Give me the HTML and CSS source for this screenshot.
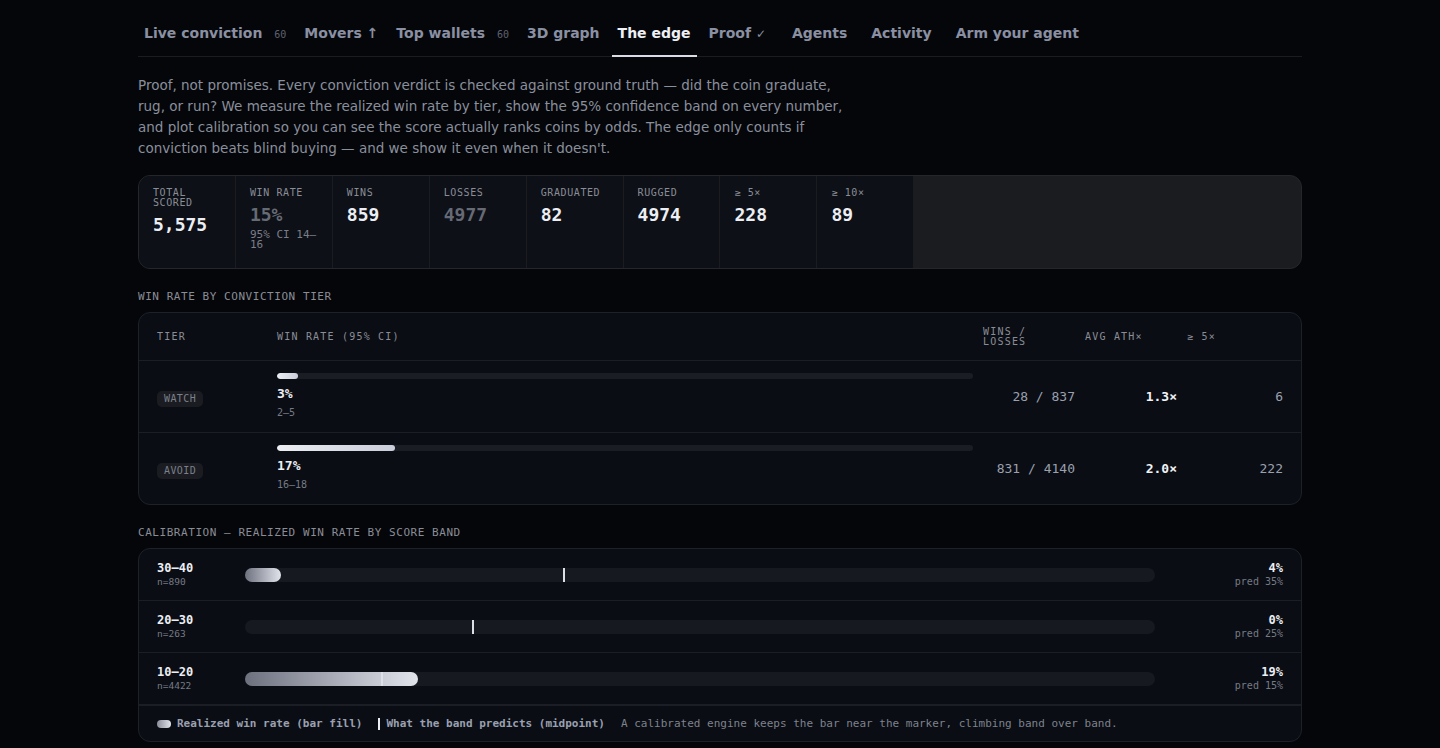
FILE: index.html
```html
<!DOCTYPE html>
<html lang="en">
<head>
    <meta charset="UTF-8">
    <title>The edge — Proof</title>
    <link rel="stylesheet" href="styles.css">
</head>
<body>
    <div class="page">
        <nav class="tabs">
            <a class="tab">Live conviction <span class="tab-count">60</span></a>
            <a class="tab">Movers ↑</a>
            <a class="tab">Top wallets <span class="tab-count">60</span></a>
            <a class="tab">3D graph</a>
            <a class="tab tab-active">The edge</a>
            <a class="tab tab-proof">Proof <span class="tab-check">✓</span></a>
            <a class="tab tab-spaced">Agents</a>
            <a class="tab tab-spaced">Activity</a>
            <a class="tab">Arm your agent</a>
        </nav>

        <p class="intro">
            Proof, not promises. Every conviction verdict is checked against ground truth — did the coin graduate,
            rug, or run? We measure the realized win rate by tier, show the 95% confidence band on every number,
            and plot calibration so you can see the score actually ranks coins by odds. The edge only counts if
            conviction beats blind buying — and we show it even when it doesn't.
        </p>

        <div class="stats">
            <div class="stat">
                <div class="stat-label">Total scored</div>
                <div class="stat-value">5,575</div>
            </div>
            <div class="stat">
                <div class="stat-label">Win rate</div>
                <div class="stat-value muted">15%</div>
                <div class="stat-sub">95% CI 14–16</div>
            </div>
            <div class="stat">
                <div class="stat-label">Wins</div>
                <div class="stat-value">859</div>
            </div>
            <div class="stat">
                <div class="stat-label">Losses</div>
                <div class="stat-value muted">4977</div>
            </div>
            <div class="stat">
                <div class="stat-label">Graduated</div>
                <div class="stat-value">82</div>
            </div>
            <div class="stat">
                <div class="stat-label">Rugged</div>
                <div class="stat-value">4974</div>
            </div>
            <div class="stat">
                <div class="stat-label">≥ 5×</div>
                <div class="stat-value">228</div>
            </div>
            <div class="stat">
                <div class="stat-label">≥ 10×</div>
                <div class="stat-value">89</div>
            </div>
        </div>

        <h3 class="section-head">Win rate by conviction tier</h3>
        <div class="card tiers">
            <div class="tier-row tier-head">
                <div>Tier</div>
                <div>Win rate (95% CI)</div>
                <div>Wins / Losses</div>
                <div>Avg ATH×</div>
                <div>≥ 5×</div>
            </div>
            <div class="tier-row">
                <div><span class="pill">Watch</span></div>
                <div class="rate">
                    <div class="track"><div class="fill" style="width: 3%"></div></div>
                    <div class="rate-pct">3%</div>
                    <div class="rate-ci">2–5</div>
                </div>
                <div class="num">28 / 837</div>
                <div class="num strong">1.3×</div>
                <div class="num">6</div>
            </div>
            <div class="tier-row">
                <div><span class="pill">Avoid</span></div>
                <div class="rate">
                    <div class="track"><div class="fill" style="width: 17%"></div></div>
                    <div class="rate-pct">17%</div>
                    <div class="rate-ci">16–18</div>
                </div>
                <div class="num">831 / 4140</div>
                <div class="num strong">2.0×</div>
                <div class="num">222</div>
            </div>
        </div>

        <h3 class="section-head">Calibration — realized win rate by score band</h3>
        <div class="card calib">
            <div class="band">
                <div>
                    <div class="band-name">30–40</div>
                    <div class="band-n">n=890</div>
                </div>
                <div class="band-track">
                    <div class="band-fill" style="width: 4%"></div>
                    <div class="band-mark" style="left: 35%"></div>
                </div>
                <div class="band-result">
                    <div class="band-pct">4%</div>
                    <div class="band-pred">pred 35%</div>
                </div>
            </div>
            <div class="band">
                <div>
                    <div class="band-name">20–30</div>
                    <div class="band-n">n=263</div>
                </div>
                <div class="band-track">
                    <div class="band-fill" style="width: 0%"></div>
                    <div class="band-mark" style="left: 25%"></div>
                </div>
                <div class="band-result">
                    <div class="band-pct">0%</div>
                    <div class="band-pred">pred 25%</div>
                </div>
            </div>
            <div class="band">
                <div>
                    <div class="band-name">10–20</div>
                    <div class="band-n">n=4422</div>
                </div>
                <div class="band-track">
                    <div class="band-fill" style="width: 19%"></div>
                    <div class="band-mark" style="left: 15%"></div>
                </div>
                <div class="band-result">
                    <div class="band-pct">19%</div>
                    <div class="band-pred">pred 15%</div>
                </div>
            </div>
            <div class="legend">
                <span class="legend-item"><span class="swatch"></span>Realized win rate (bar fill)</span>
                <span class="legend-item"><span class="tick"></span>What the band predicts (midpoint)</span>
                <span class="legend-note">A calibrated engine keeps the bar near the marker, climbing band over band.</span>
            </div>
        </div>
    </div>
</body>
</html>
```

FILE: styles.css
```css
body {
    margin: 0;
    background-color: #05060a;
    color: #e6e8ee;
    font-family: "DejaVu Sans", sans-serif;
}
.page {
    max-width: 1164px;
    margin: 0 auto;
    padding: 13px 0 40px;
}

/* tabs */
.tabs {
    display: flex;
    gap: 6px;
    border-bottom: 1px solid #1a1c22;
}
.tab {
    padding: 12px 6px 14px;
    font-size: 14px;
    line-height: 16px;
    font-weight: bold;
    color: #8a90a2;
    border-bottom: 2px solid transparent;
    margin-bottom: -1px;
    white-space: nowrap;
}
.tab-proof {
    margin-right: 8px;
}
.tab-spaced {
    margin-right: 6px;
}
.tab-active {
    color: #eef0f5;
    border-bottom-color: #d9dce4;
}
.tab-count {
    font-family: "DejaVu Sans Mono", monospace;
    font-size: 10px;
    line-height: 10px;
    font-weight: normal;
    color: #5e6270;
    margin-left: 7px;
}
.tab-check {
    font-size: 12px;
    line-height: 12px;
    font-weight: normal;
}

.intro {
    max-width: 720px;
    margin: 18px 0 16px;
    font-size: 13.5px;
    line-height: 21px;
    color: #8a8f9c;
}

/* stats strip */
.stats {
    display: grid;
    grid-template-columns: repeat(12, 1fr);
    gap: 1px;
    background-color: #1b1c20;
    border: 1px solid #24262c;
    border-radius: 12px;
    overflow: hidden;
}
.stat {
    background-color: #0d1017;
    padding: 12px 14px 16px;
    height: 64px;
    font-family: "DejaVu Sans Mono", monospace;
}
.stat-label {
    font-size: 10px;
    line-height: 10px;
    letter-spacing: 0.06em;
    text-transform: uppercase;
    color: #8a8d96;
}
.stat-value {
    margin-top: 6px;
    font-size: 18px;
    font-weight: bold;
    color: #eceef3;
}
.stat-value.muted {
    color: #666a75;
}
.stat-sub {
    margin-top: 5px;
    font-size: 11px;
    line-height: 10px;
    color: #7a7e88;
}

.section-head {
    margin: 21px 0 9px;
    font-family: "DejaVu Sans Mono", monospace;
    font-size: 11px;
    font-weight: normal;
    letter-spacing: 0.05em;
    text-transform: uppercase;
    color: #8a8d96;
}

.card {
    background-color: #0a0d14;
    border: 1px solid #1f2128;
    border-radius: 12px;
    font-family: "DejaVu Sans Mono", monospace;
}

/* tier table */
.tier-row {
    display: grid;
    grid-template-columns: 110px 1fr 92px 92px 96px;
    gap: 10px;
    align-items: center;
    padding: 0 18px;
    height: 71px;
    border-top: 1px solid #1b1e25;
}
.tier-row.tier-head {
    height: 47px;
    border-top: none;
    font-size: 10px;
    line-height: 10px;
    letter-spacing: 0.12em;
    text-transform: uppercase;
    color: #8a8d96;
}
.pill {
    display: inline-block;
    padding: 3px 7px;
    background-color: #1a1c22;
    border-radius: 5px;
    font-size: 10px;
    line-height: 10px;
    letter-spacing: 0.04em;
    text-transform: uppercase;
    color: #7c808a;
}
.track {
    height: 6px;
    background-color: #1a1d24;
    border-radius: 3px;
    overflow: hidden;
}
.fill {
    height: 100%;
    border-radius: 3px;
    background: linear-gradient(90deg, #eceef3, #c9cdd9);
}
.rate-pct {
    margin-top: 7px;
    font-size: 13px;
    line-height: 16px;
    font-weight: bold;
    color: #eceef3;
}
.rate-ci {
    margin-top: 4px;
    font-size: 10px;
    line-height: 14px;
    color: #767a85;
}
.num {
    text-align: right;
    font-size: 13px;
    color: #9aa0ae;
}
.num.strong {
    font-weight: bold;
    color: #f0f2f6;
}

/* calibration */
.band {
    display: grid;
    grid-template-columns: 78px 1fr 118px;
    gap: 10px;
    align-items: center;
    padding: 0 18px;
    height: 51px;
    border-top: 1px solid #1b1e25;
}
.band:first-child {
    border-top: none;
}
.band-name {
    font-size: 12px;
    line-height: 14px;
    font-weight: bold;
    color: #eceef3;
}
.band-n {
    font-size: 9.5px;
    line-height: 13px;
    color: #767a85;
}
.band-track {
    position: relative;
    height: 14px;
    background-color: #161920;
    border-radius: 7px;
}
.band-fill {
    height: 100%;
    border-radius: 7px;
    background: linear-gradient(90deg, #6d717e, #e2e4ec);
}
.band-mark {
    position: absolute;
    top: 0;
    width: 2px;
    height: 14px;
    margin-left: -1px;
    background-color: #dcdfe6;
}
.band-result {
    text-align: right;
}
.band-pct {
    font-size: 12px;
    line-height: 14px;
    font-weight: bold;
    color: #eceef3;
}
.band-pred {
    font-size: 10px;
    line-height: 13px;
    color: #767a85;
}
.legend {
    display: flex;
    align-items: center;
    gap: 16px;
    padding: 0 18px;
    height: 35px;
    border-top: 2px solid #1b1e25;
    font-size: 11px;
}
.legend-item {
    display: flex;
    align-items: center;
    font-weight: bold;
    color: #9aa0b0;
}
.swatch {
    width: 14px;
    height: 8px;
    margin-right: 6px;
    border-radius: 4px;
    background: linear-gradient(90deg, #8a8e9a, #e2e4ec);
}
.tick {
    width: 2px;
    height: 12px;
    margin-right: 6px;
    background-color: #eceef3;
}
.legend-note {
    color: #7e828c;
}
```
